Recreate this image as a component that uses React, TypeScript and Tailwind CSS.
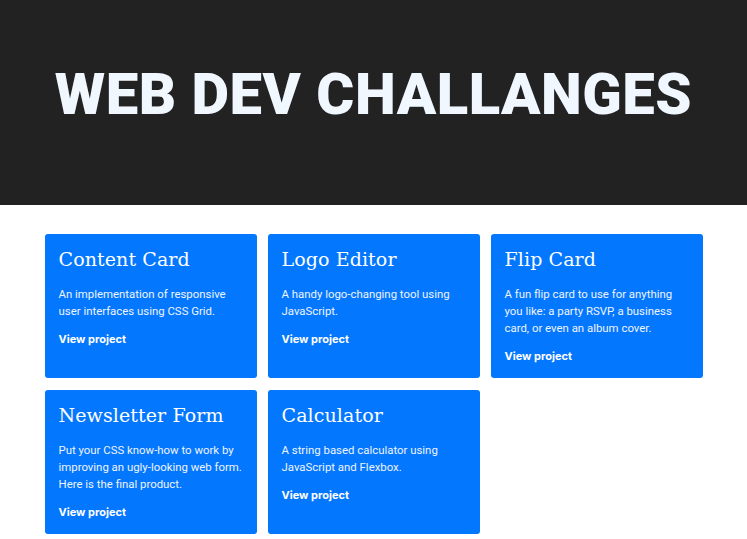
const projects = [
  {
    title: 'Content Card',
    text: 'An implementation of responsive user interfaces using CSS Grid.',
  },
  {
    title: 'Logo Editor',
    text: 'A handy logo-changing tool using JavaScript.',
  },
  {
    title: 'Flip Card',
    text: 'A fun flip card to use for anything you like: a party RSVP, a business card, or even an album cover.',
  },
  {
    title: 'Newsletter Form',
    text: 'Put your CSS know-how to work by improving an ugly-looking web form. Here is the final product.',
  },
  {
    title: 'Calculator',
    text: 'A string based calculator using JavaScript and Flexbox.',
  },
]

function ProjectCard({ title, text }: { title: string; text: string }) {
  return (
    <div className="rounded-[3px] bg-[#0477ff] px-[14px] pt-[13px] pb-[13px] text-white">
      <h2 className="font-['DejaVu_Serif',serif] text-[19px] leading-[24px] tracking-[0.1px]">
        {title}
      </h2>
      <p className="mt-[15px] font-['Roboto',sans-serif] text-[11.4px] leading-[17px] text-[#eef4ff]">
        {text}
      </p>
      <a href="#" className="mt-[11px] block font-['Inter',sans-serif] text-[11px] font-bold leading-[17px]">
        View project
      </a>
    </div>
  )
}

export default function App() {
  return (
    <div className="min-h-screen bg-white">
      <header className="flex h-[205px] items-center justify-center bg-[#222222] pb-[18px]">
        <h1 className="font-['Roboto',sans-serif] text-[58px] font-black uppercase leading-none tracking-[0.5px] text-[#f0f7ff]">
          Web Dev Challanges
        </h1>
      </header>
      <main className="mx-auto mt-[29px] grid w-[658px] grid-cols-3 gap-x-[11px] gap-y-[12px]">
        {projects.map((p) => (
          <ProjectCard key={p.title} title={p.title} text={p.text} />
        ))}
      </main>
    </div>
  )
}
